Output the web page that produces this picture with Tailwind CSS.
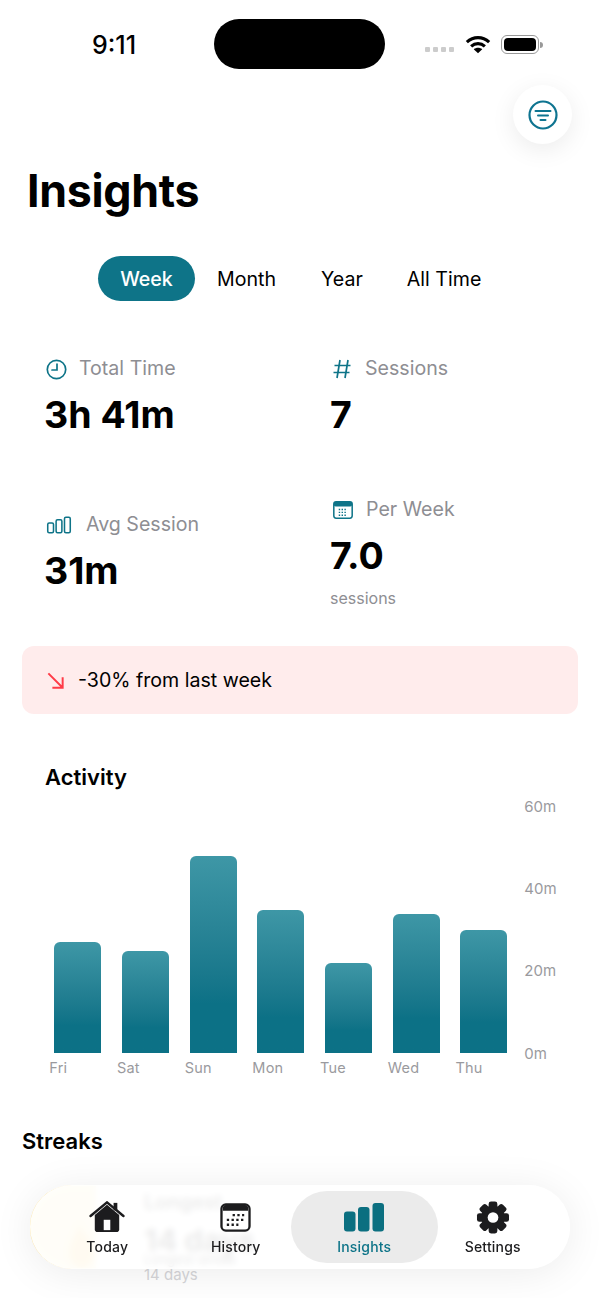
<!doctype html>
<html>

<head>
    <title>Insights</title>
    <meta charset="UTF-8">
    <meta name="viewport" content="width=device-width, initial-scale=1.0">
    <script src="https://cdn.jsdelivr.net/npm/@tailwindcss/browser@4"></script>
</head>

<body>
    <div class="relative w-[600px] h-[1298px] overflow-hidden bg-white text-black font-['Inter',sans-serif]">
        <!-- status bar -->
        <div class="flex items-center h-[50px] mt-[19px] pl-[92px]">
            <span class="w-[122px] pt-[1px] text-[25px] leading-[50px] font-medium">9:11</span>
            <div class="w-[171px] h-[50px] rounded-full bg-black"></div>
            <div class="flex items-center ml-[40px] gap-[3px] mt-[11px]">
                <span class="w-[5px] h-[5px] rounded-[1px] bg-[#ccc]"></span>
                <span class="w-[5px] h-[5px] rounded-[1px] bg-[#ccc]"></span>
                <span class="w-[5px] h-[5px] rounded-[1px] bg-[#ccc]"></span>
                <span class="w-[5px] h-[5px] rounded-[1px] bg-[#ccc]"></span>
            </div>
            <svg class="ml-[11px] mt-[1px]" width="26" height="19" viewBox="0 0 28 20" fill="none" stroke="#000" stroke-width="3.4">
                <path d="M2 7.500C9 1 19 1 26 7.500" />
                <path d="M6.600 12C11 8 17 8 21.400 12" />
                <path d="M14 19.500l-4.600-4.400c2.600-2.200 6.600-2.200 9.200 0z" fill="#000" stroke="none" />
            </svg>
            <div class="ml-[10px] mt-[1px] w-[38px] h-[19px] rounded-[6px] border border-[#999] p-[2px]">
                <div class="w-full h-full rounded-[4px] bg-black"></div>
            </div>
            <div class="w-[3px] h-[6px] mt-[1px] ml-[1px] rounded-r-full bg-[#999]"></div>
        </div>

        <!-- filter button -->
        <div class="flex justify-end pr-[28px] mt-[16px]">
            <div class="flex items-center justify-center w-[59px] h-[59px] rounded-full bg-white shadow-[0_6px_24px_rgba(0,0,0,0.08)]">
                <svg width="30" height="30" viewBox="0 0 30 30" fill="none" stroke="#0e7490" stroke-linecap="round">
                    <circle cx="15" cy="15" r="13.500" stroke-width="2.200" />
                    <path d="M7.500 11h15" stroke-width="2" />
                    <path d="M10 15.500h10" stroke-width="2" />
                    <path d="M12.500 20h5" stroke-width="2" />
                </svg>
            </div>
        </div>

        <h1 class="mt-[20px] pl-[27px] text-[44.700px] leading-[54px] font-bold tracking-[-0.3px]">Insights</h1>

        <!-- range selector -->
        <div class="flex items-center h-[45px] mt-[38px] ml-[98px] text-[19.600px]">
            <div class="flex items-center justify-center w-[97px] h-[45px] pt-[2px] rounded-full bg-[#0e7488] text-white font-medium">Week</div>
            <div class="ml-[22px] pt-[2px]">Month</div>
            <div class="ml-[45px] pt-[2px]">Year</div>
            <div class="ml-[44px] pt-[2px]">All Time</div>
        </div>

        <!-- stats -->
        <div class="grid grid-cols-[285px_1fr] pl-[45px] mt-[52px]">
            <div class="h-[156px]">
                <div class="flex items-center h-[32px] gap-[12px] text-[19.600px] text-[#8e8e93]">
                    <svg class="ml-[1px]" width="21" height="21" viewBox="0 0 21 21" fill="none" stroke="#0e7488" stroke-width="1.700">
                        <circle cx="10.500" cy="10.500" r="9.200" />
                        <path d="M11 5v6H6" stroke-linecap="round" />
                    </svg>
                    <span>Total Time</span>
                </div>
                <div class="mt-[7px] -ml-[1px] text-[37.500px] leading-[46px] font-bold">3h 41m</div>
            </div>
            <div>
                <div class="flex items-center h-[32px] gap-[14px] text-[19.600px] text-[#8e8e93]">
                    <svg class="ml-[3px]" width="18" height="20" viewBox="0 0 18 20" fill="none" stroke="#0e7488" stroke-width="1.700">
                        <path d="M7 1L4 19M15 1l-3 18M1.500 6.500h16M0.500 13.500h16" />
                    </svg>
                    <span>Sessions</span>
                </div>
                <div class="mt-[7px] text-[37.500px] leading-[46px] font-bold">7</div>
            </div>
            <div>
                <div class="flex items-center h-[32px] gap-[14px] text-[19.600px] text-[#8e8e93]">
                    <svg class="ml-[1px]" width="26" height="18" viewBox="0 0 27 18" fill="none" stroke="#0e7488" stroke-width="1.600">
                        <rect x="1.800" y="7" width="6" height="10" rx="1.500" />
                        <rect x="10.500" y="3.500" width="6" height="13.500" rx="1.500" />
                        <rect x="19.200" y="1" width="6" height="16" rx="1.500" />
                    </svg>
                    <span>Avg Session</span>
                </div>
                <div class="mt-[7px] -ml-[1px] text-[37.500px] leading-[46px] font-bold">31m</div>
            </div>
            <div class="-mt-[15px]">
                <div class="flex items-center h-[32px] gap-[13px] text-[19.600px] text-[#8e8e93]">
                    <svg class="ml-[3px]" width="20" height="18" viewBox="0 0 21 19">
                        <rect x="0.800" y="0.800" width="19.400" height="17.400" rx="2.500" fill="#fff" stroke="#0e7488" stroke-width="1.600" />
                        <rect x="0.800" y="0.800" width="19.400" height="5" rx="2" fill="#0e7488" />
                        <path d="M6 9h9M6 12h9M6 15h9" stroke="#0e7488" stroke-width="1.500" stroke-dasharray="1.500 1.500" />
                    </svg>
                    <span>Per Week</span>
                </div>
                <div class="mt-[7px] text-[37.500px] leading-[46px] font-bold">7.0</div>
                <div class="mt-[9px] text-[16px] leading-[20px] text-[#8e8e93]">sessions</div>
            </div>
        </div>

        <!-- trend banner -->
        <div class="flex items-center h-[68px] mx-[22px] mt-[38px] pl-[25px] rounded-[12px] bg-[#ffecec] text-[19.600px]">
            <svg width="17" height="17" viewBox="0 0 19 19" fill="none" stroke="#ff3b47" stroke-width="2.200">
                <path d="M1.500 1.500L17 17M17.500 6v11.500H6" />
            </svg>
            <span class="ml-[14px] pt-[2px]">-30% from last week</span>
        </div>

        <!-- activity chart -->
        <h2 class="mt-[49px] pl-[45px] text-[22px] leading-[28px] font-semibold">Activity</h2>
        <div class="relative h-[288px] -mt-[2px] ml-[54.300px]">
            <div class="absolute left-[470px] top-[7.500px] flex flex-col gap-[62.400px] text-[15px] leading-[20px] text-[#9a9a9e]">
                <span>60m</span>
                <span>40m</span>
                <span>20m</span>
                <span>0m</span>
            </div>
            <div class="flex items-end gap-[20.700px] h-[264px]">
                <div class="w-[47px] h-[111px] rounded-t-[6px] bg-gradient-to-b from-[#3e97a6] from-0% to-[#0c7186] to-75%"></div>
                <div class="w-[47px] h-[102px] rounded-t-[6px] bg-gradient-to-b from-[#3e97a6] from-0% to-[#0c7186] to-75%"></div>
                <div class="w-[47px] h-[197px] rounded-t-[6px] bg-gradient-to-b from-[#3e97a6] from-0% to-[#0c7186] to-75%"></div>
                <div class="w-[47px] h-[143px] rounded-t-[6px] bg-gradient-to-b from-[#3e97a6] from-0% to-[#0c7186] to-75%"></div>
                <div class="w-[47px] h-[90px] rounded-t-[6px] bg-gradient-to-b from-[#3e97a6] from-0% to-[#0c7186] to-75%"></div>
                <div class="w-[47px] h-[139px] rounded-t-[6px] bg-gradient-to-b from-[#3e97a6] from-0% to-[#0c7186] to-75%"></div>
                <div class="w-[47px] h-[123px] rounded-t-[6px] bg-gradient-to-b from-[#3e97a6] from-0% to-[#0c7186] to-75%"></div>
            </div>
            <div class="flex -ml-[5px] mt-[5px] text-[14.500px] leading-[20px] tracking-[0.200px] text-[#9a9a9e]">
                <span class="w-[67.700px]">Fri</span>
                <span class="w-[67.700px]">Sat</span>
                <span class="w-[67.700px]">Sun</span>
                <span class="w-[67.700px]">Mon</span>
                <span class="w-[67.700px]">Tue</span>
                <span class="w-[67.700px]">Wed</span>
                <span class="w-[67.700px]">Thu</span>
            </div>
        </div>

        <h2 class="mt-[50px] pl-[22px] text-[22px] leading-[28px] font-semibold">Streaks</h2>

        <!-- streak card, mostly under the tab bar -->
        <div class="flex mt-[31px] ml-[30px] h-[100px]">
            <div class="w-[66px] h-[82px] pl-[39px] pt-[37px] rounded-l-[40px] bg-[#ffe7a0]">
                <svg width="25" height="44" viewBox="0 0 25 44">
                    <path d="M10 0c2 10 15 18 15 30a12.500 14 0 0 1-25 0C0 18 8 12 10 0z" fill="#ffc24d" />
                </svg>
            </div>
            <div class="ml-[48px] mt-[4px]">
                <div class="text-[20px] leading-[24px] font-semibold">Longest</div>
                <div class="mt-[5px] text-[30px] leading-[42px] font-bold">14 days</div>
                <div class="-mt-[9px] text-[13px] leading-[14px] font-medium">Longest streak</div>
                <div class="text-[15px] leading-[18px] text-[#d5d5d8]">14 days</div>
            </div>
        </div>

        <!-- tab bar -->
        <div class="absolute left-[30px] top-[1185px] w-[540px] h-[84px] pl-[13px] pt-[6px] rounded-[42px] bg-white/92 backdrop-blur-[3px] shadow-[0_4px_40px_rgba(0,0,0,0.08)] text-[14px] tracking-[0.200px] font-medium text-[#1c1c1e]">
            <div class="grid grid-cols-4 w-[514px] h-[72px]">
                <div class="flex flex-col items-center pt-[10px]">
                    <svg width="36" height="31" viewBox="0 0 38 33" fill="#1c1c1e">
                        <path d="M6 15L19 4l13 11v15a3 3 0 0 1-3 3H9a3 3 0 0 1-3-3z" />
                        <rect x="26" y="2" width="4" height="8" />
                        <path d="M1.500 16L19 1.500 36.500 16" fill="none" stroke="#1c1c1e" stroke-width="2.600" stroke-linecap="round" />
                        <rect x="15.500" y="20" width="7" height="11" fill="#fff" />
                    </svg>
                    <span class="mt-[5px] leading-[20px]">Today</span>
                </div>
                <div class="flex flex-col items-center pt-[12px]">
                    <svg width="31" height="29" viewBox="0 0 32 30">
                        <rect x="1.500" y="1.500" width="29" height="27" rx="4.500" fill="#fff" stroke="#1c1c1e" stroke-width="2.400" />
                        <path d="M3 5a3 3 0 0 1 3-3h20a3 3 0 0 1 3 3v3H3z" fill="#1c1c1e" />
                        <path d="M13 12.500h12M7 17.500h18M7 22.500h12" stroke="#1c1c1e" stroke-width="2.400" stroke-dasharray="2.400 2.500" />
                    </svg>
                    <span class="mt-[5px] leading-[20px]">History</span>
                </div>
                <div class="flex flex-col items-center -mx-[9px] pt-[12px] rounded-[36px] bg-[#ebebeb] text-[#0e7488]">
                    <svg width="40" height="29" viewBox="0 0 40 29" fill="#0b6f80">
                        <rect x="0" y="8.500" width="11.500" height="20" rx="3" />
                        <rect x="14" y="4" width="11.500" height="24.500" rx="3" />
                        <rect x="28.500" y="0" width="11.500" height="28.500" rx="3" />
                    </svg>
                    <span class="mt-[5px] leading-[20px]">Insights</span>
                </div>
                <div class="flex flex-col items-center pt-[10px]">
                    <svg width="34" height="33" viewBox="-17 -17 34 34" fill="#1c1c1e">
                        <circle r="12" />
                        <rect x="-4.500" y="-16.500" width="9" height="33" rx="2.500" />
                        <rect x="-4.500" y="-16.500" width="9" height="33" rx="2.500" transform="rotate(45)" />
                        <rect x="-4.500" y="-16.500" width="9" height="33" rx="2.500" transform="rotate(90)" />
                        <rect x="-4.500" y="-16.500" width="9" height="33" rx="2.500" transform="rotate(135)" />
                        <circle r="5.500" fill="#fff" />
                    </svg>
                    <span class="mt-[3px] leading-[20px]">Settings</span>
                </div>
            </div>
        </div>
    </div>
</body>

</html>
